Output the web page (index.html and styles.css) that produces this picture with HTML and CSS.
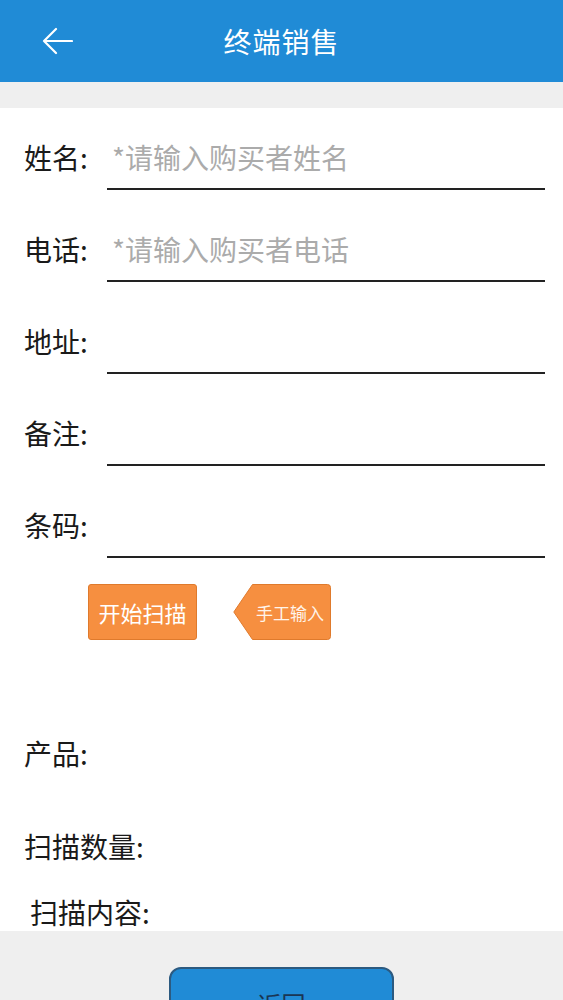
FILE: index.html
```html
<!DOCTYPE html>
<html lang="zh">
<head>
<meta charset="utf-8">
<title>终端销售</title>
<link rel="stylesheet" href="styles.css">
</head>
<body>
<header class="header">
  <div class="back">
    <svg width="32" height="28" viewBox="0 0 32 28"><path d="M31 14H3M15 2L3 14L15 26" fill="none" stroke="#fff" stroke-width="2.2" stroke-linecap="round" stroke-linejoin="round"/></svg>
  </div>
  <div class="title">终端销售</div>
  <div></div>
</header>
<div class="band"></div>
<main class="form">
  <div class="row"><div class="label">姓名:</div><div class="field placeholder">*请输入购买者姓名</div></div>
  <div class="row"><div class="label">电话:</div><div class="field placeholder">*请输入购买者电话</div></div>
  <div class="row"><div class="label">地址:</div><div class="field"></div></div>
  <div class="row"><div class="label">备注:</div><div class="field"></div></div>
  <div class="row"><div class="label">条码:</div><div class="field"></div></div>
  <div class="actions">
    <div class="btn-scan">开始扫描</div>
    <div class="btn-manual">
      <svg class="manual-bg" width="98" height="56" viewBox="0 0 98 56"><path d="M19.5 0.5H94.5Q97.5 0.5 97.5 3.5V52.5Q97.5 55.5 94.5 55.5H19.5L0.8 28Z" fill="#f68f40" stroke="#df7a2c" stroke-width="1"/></svg>
      <span class="manual-text">手工输入</span>
    </div>
  </div>
  <div class="info">
    <div class="info-line product">产品:</div>
    <div class="info-line count">扫描数量:</div>
    <div class="info-line content">扫描内容:</div>
  </div>
</main>
<footer class="footer">
  <div class="btn-return">返回</div>
</footer>
</body>
</html>
```

FILE: styles.css
```css
html, body {
  margin: 0;
  padding: 0;
}
body {
  font-family: "Noto Sans CJK SC", "Noto Sans", sans-serif;
  background: #ffffff;
  color: #1a1a1a;
  width: 563px;
  height: 1000px;
  overflow: hidden;
}
.header {
  height: 82px;
  background: #208bd6;
  display: grid;
  grid-template-columns: 1fr auto 1fr;
  align-items: center;
}
.back {
  padding-left: 41px;
  display: flex;
  align-items: center;
}
.title {
  color: #ffffff;
  font-size: 28px;
  line-height: 40px;
  letter-spacing: 1px;
}
.band {
  height: 26px;
  background: #efefef;
}
.form {
  padding: 30px 18px 0 24px;
}
.row {
  display: flex;
  align-items: flex-start;
  margin-bottom: 40px;
}
.row:nth-child(5) {
  margin-bottom: 0;
}
.label {
  width: 83px;
  font-size: 28px;
  line-height: 38px;
  color: #1a1a1a;
}
.field {
  flex: 1;
  box-sizing: border-box;
  height: 52px;
  padding: 0 0 12px 5px;
  border-bottom: 2px solid #222222;
  font-size: 28px;
  line-height: 38px;
}
.placeholder {
  color: #ababab;
}
.actions {
  display: flex;
  gap: 36px;
  margin-top: 26px;
  padding-left: 64px;
}
.btn-scan {
  box-sizing: border-box;
  width: 109px;
  height: 56px;
  background: #f68f40;
  border: 1px solid #df7a2c;
  border-radius: 3px;
  color: #fff;
  font-size: 22px;
  display: flex;
  align-items: center;
  justify-content: center;
}
.btn-manual {
  position: relative;
  width: 98px;
  height: 56px;
  display: flex;
  align-items: center;
  justify-content: flex-end;
}
.manual-bg {
  position: absolute;
  left: 0;
  top: 0;
}
.manual-text {
  position: relative;
  color: #fff4ea;
  font-size: 17px;
  padding-right: 7px;
}
.info {
  margin-top: 94px;
}
.info-line {
  font-size: 28px;
  line-height: 38px;
}
.count {
  margin-top: 55px;
}
.content {
  margin-top: 28px;
  padding-left: 6px;
}
.footer {
  background: #efefef;
  padding-top: 36px;
  height: 200px;
}
.btn-return {
  box-sizing: border-box;
  width: 225px;
  height: 72px;
  margin-left: 169px;
  background: #208bd6;
  border: 2px solid #2c5a80;
  border-radius: 12px;
  color: #1a3553;
  font-size: 24px;
  display: flex;
  align-items: center;
  justify-content: center;
}
```
